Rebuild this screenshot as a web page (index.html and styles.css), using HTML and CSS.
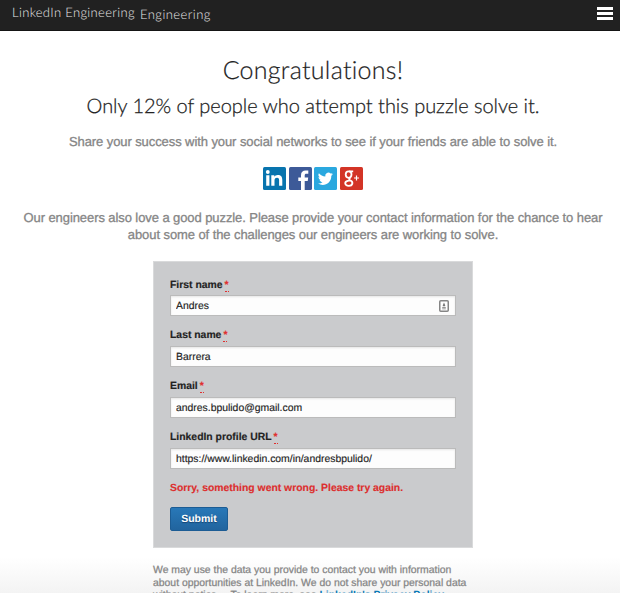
FILE: index.html
```html
<!DOCTYPE html>
<html lang="en">
<head>
<meta charset="utf-8">
<title>LinkedIn Engineering</title>
<link rel="stylesheet" href="styles.css">
</head>
<body>
<header class="topbar">
  <span class="brand">LinkedIn Engineering</span>
  <span class="section">Engineering</span>
  <span class="menu"><i></i><i></i><i></i></span>
</header>
<main>
  <h1>Congratulations!</h1>
  <h2>Only 12% of people who attempt this puzzle solve it.</h2>
  <p class="share">Share your success with your social networks to see if your friends are able to solve it.</p>
  <div class="social">
    <svg viewBox="0 0 23 23"><rect width="23" height="23" rx="1.5" fill="#0874ae"/><circle cx="4.8" cy="5" r="1.9" fill="#fff"/><path d="M3.2 8.3h3.2v10.5H3.2zM8.3 8.3h3v1.5c.7-1.1 1.8-1.8 3.4-1.8 3.4 0 4.6 1.9 4.6 5v5.8h-3.2v-5.3c0-1.6-.4-2.7-2-2.7-1.9 0-2.6 1.2-2.6 2.9v5.1H8.3z" fill="#fff"/></svg>
    <svg viewBox="0 0 23 23"><rect width="23" height="23" rx="1.5" fill="#3d5a98"/><path d="M12 23v-9H9.300v-3.500H12V8.200c0-3.200 1.800-4.700 4.700-4.700h2.600v3.300h-1.800c-1.400 0-1.800.6-1.800 1.800v1.900h3.500l-.5 3.500h-3v9z" fill="#fff"/></svg>
    <svg viewBox="0 0 23 23"><rect width="23" height="23" rx="1.5" fill="#2aa8df"/><path d="M18.9 7.1c-.5.3-1.1.4-1.7.5.6-.4 1.1-1 1.3-1.7-.6.4-1.2.6-1.9.7a3.1 3.1 0 0 0-5.3 2.8C8.700 9.300 6.500 8.100 4.900 6.200a3.100 3.100 0 0 0 1 4.100c-.5 0-1-.1-1.400-.4 0 1.500 1 2.800 2.500 3.100-.5.1-.9.1-1.400.1.400 1.200 1.500 2.100 2.900 2.100A6.200 6.200 0 0 1 4 16.500c5.900 3.700 13.500-.4 13.300-7.800.6-.4 1.200-1 1.600-1.600z" fill="#fff"/></svg>
    <svg viewBox="0 0 23 23"><rect width="23" height="23" rx="1.5" fill="#d33426"/><g fill="none" stroke="#fff" stroke-width="1.8"><ellipse cx="8.600" cy="7.600" rx="2.900" ry="3.200"/><path d="M9 4.300h4.200M10.500 10.500c-2.500 1.500-1.200 2.300.4 3.300 2.500 1.600 1.800 5-2 5-4.500 0-5.200-4.400-.2-5.100l1.600-.1"/></g><path d="M16.500 8.500v5M14 11h5" stroke="#fff" stroke-width="1.200"/></svg>
  </div>
  <p class="intro">Our engineers also love a good puzzle. Please provide your contact information for the chance to hear<br>about some of the challenges our engineers are working to solve.</p>
  <form class="panel">
    <label for="first">First name<abbr>*</abbr></label>
    <div class="field"><input id="first" value="Andres"><svg class="card" viewBox="0 0 10 12"><rect x=".75" y=".75" width="8.500" height="10.500" rx="1" fill="#fff" stroke="#858585" stroke-width="1.500"/><path d="M5 2.500l1.200 2.700v1H3.800v-1zM3.200 7h3.600v.8H3.200zM3.200 8.500h3.600v.7H3.200z" fill="#777"/></svg></div>
    <label for="last">Last name<abbr>*</abbr></label>
    <div class="field"><input id="last" value="Barrera"></div>
    <label for="email">Email<abbr>*</abbr></label>
    <div class="field"><input id="email" value="andres.bpulido@gmail.com"></div>
    <label for="url">LinkedIn profile URL<abbr>*</abbr></label>
    <div class="field"><input id="url" value="https://www.linkedin.com/in/andresbpulido/"></div>
    <p class="error">Sorry, something went wrong. Please try again.</p>
    <button type="button">Submit</button>
  </form>
</main>
<footer><p>We may use the data you provide to contact you with information<br>about opportunities at LinkedIn. We do not share your personal data<br>without notice. <span class="more">To learn more, see <a>LinkedIn's Privacy Policy</a>.</span></p></footer>
</body>
</html>
```

FILE: styles.css
```css
* { box-sizing: border-box; }
html, body { height: 593px; overflow: hidden; }
body { margin: 0; background: #fff; font-family: "Liberation Sans", Arial, sans-serif; text-rendering: geometricPrecision; }
.topbar { height: 31px; display: flex; align-items: flex-start; background: #212121; color: #e8e8e8; font: 300 13px/16px Lato, sans-serif; padding: 0 7px 0 12px; border-bottom: 1px solid #151515; }
.brand { margin-top: 4px; width: 128px; letter-spacing: .34px; white-space: nowrap; }
.section { margin-top: 6px; letter-spacing: .44px; }
.menu { margin: 7px 0 0 auto; width: 16px; display: grid; gap: 2px; }
.menu i { height: 3px; background: #fff; }
main { display: flex; flex-direction: column; align-items: center; padding-left: 6px; }
h1, h2, p { margin: 0; white-space: nowrap; }
h1 { margin-top: 24px; font: 300 25px/30px Lato, sans-serif; color: #222; letter-spacing: .28px; -webkit-text-stroke: .2px; }
h2 { margin-top: 9px; font: 300 20px/24px Lato, sans-serif; color: #222; letter-spacing: -.03px; -webkit-text-stroke: .25px; }
.share, .intro { font-size: 13px; letter-spacing: -.085px; color: #858585; -webkit-text-stroke: .3px #858585; text-align: center; }
.share { margin-top: 15px; line-height: 18px; }
.social { margin-top: 16px; display: flex; gap: 2.700px; }
.social svg { width: 23px; height: 23px; }
.intro { margin-top: 19px; line-height: 17px; }
.panel { width: 320px; height: 287px; margin-top: 18px; background: #cacbcd; border: 1px solid #d9dadb; padding: 15px 16px 0; }
label { display: block; height: 18px; line-height: 17px; font-size: 10.400px; font-weight: bold; color: #222; -webkit-text-stroke: .15px; }
label:not(:first-child) { line-height: 16px; }
abbr { color: #e02f2f; margin-left: 2px; border-bottom: 1px dotted #e02f2f; }
.field { position: relative; height: 21px; margin-bottom: 12px; }
input { display: block; width: 286px; height: 21px; padding: 2px 5px 0; border: 1px solid #bbb; background: #fdfdfd; box-shadow: inset 0 1px 2px #e5e5e5; font: 10.400px "Liberation Sans", Arial, sans-serif; color: #222; -webkit-text-stroke: .15px; text-rendering: geometricPrecision; }
.card { position: absolute; width: 10px; height: 12px; right: 7px; top: 5px; }
.error { font-size: 10.400px; line-height: 15px; font-weight: bold; color: #dd2e2e; -webkit-text-stroke: .15px; }
button { display: block; width: 58px; height: 24px; margin-top: 11px; padding: 0 0 1px; border: 1px solid #1c5c94; border-radius: 2px; background: linear-gradient(#2878b8, #21649e); color: #fff; font: bold 10.500px "Liberation Sans", Arial, sans-serif; text-shadow: 0 1px 1px #164572; text-rendering: geometricPrecision; }
footer { height: 46px; padding: 17px 0 0 153px; background: linear-gradient(#fff 20%, #f3f3f3); font-size: 10.420px; line-height: 12.500px; color: #858585; -webkit-text-stroke: .25px; }
.more { padding-left: 8px; }
footer a { color: #0878b5; font-weight: bold; -webkit-text-stroke: 0; }
```
